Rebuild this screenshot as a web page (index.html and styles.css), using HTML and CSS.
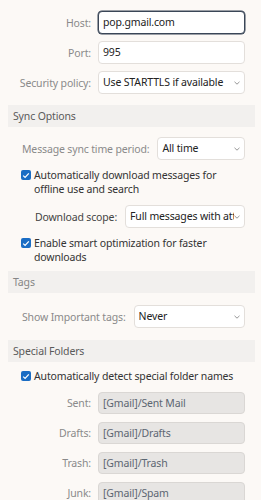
FILE: index.html
```html
<!DOCTYPE html>
<html lang="en">
<head>
	<meta charset="UTF-8">
	<title>Account settings</title>
	<link rel="stylesheet" href="styles.css">
</head>
<body>
	<div class="page">
		<!-- server -->
		<div class="grid server">
			<label class="lbl">Host:</label>
			<div class="field focus">pop.gmail.com</div>
			<label class="lbl">Port:</label>
			<div class="field">995</div>
			<label class="lbl">Security policy:</label>
			<div class="field select"><span class="val">Use STARTTLS if available</span><svg class="chev" width="6" height="4" viewBox="0 0 6 4"><polyline points="0.5,0.8 3,3.2 5.5,0.8" fill="none" stroke="#8a8a8a" stroke-width="0.9"/></svg></div>
		</div>

		<h3 class="head">Sync Options</h3>
		<div class="sec s-sync">
			<div class="row r-sync">
				<label class="lbl">Message sync time period:</label>
				<div class="field select"><span class="val">All time</span><svg class="chev" width="6" height="4" viewBox="0 0 6 4"><polyline points="0.5,0.8 3,3.2 5.5,0.8" fill="none" stroke="#8a8a8a" stroke-width="0.9"/></svg></div>
			</div>
			<div class="check c1">
				<span class="box"><svg width="8" height="7" viewBox="0 0 8 7"><polyline points="1.2,3.6 3.1,5.4 6.8,1.4" fill="none" stroke="#fff" stroke-width="1.3"/></svg></span>
				<span class="txt">Automatically download messages for offline use and search</span>
			</div>
			<div class="row r-scope">
				<label class="lbl dark">Download scope:</label>
				<div class="field select"><span class="val">Full messages with attachments</span><svg class="chev" width="6" height="4" viewBox="0 0 6 4"><polyline points="0.5,0.8 3,3.2 5.5,0.8" fill="none" stroke="#8a8a8a" stroke-width="0.9"/></svg></div>
			</div>
			<div class="check c2">
				<span class="box"><svg width="8" height="7" viewBox="0 0 8 7"><polyline points="1.2,3.6 3.1,5.4 6.8,1.4" fill="none" stroke="#fff" stroke-width="1.3"/></svg></span>
				<span class="txt">Enable smart optimization for faster downloads</span>
			</div>
		</div>

		<h3 class="head light">Tags</h3>
		<div class="sec s-tags">
			<div class="row r-tags">
				<label class="lbl">Show Important tags:</label>
				<div class="field select"><span class="val">Never</span><svg class="chev" width="6" height="4" viewBox="0 0 6 4"><polyline points="0.5,0.8 3,3.2 5.5,0.8" fill="none" stroke="#8a8a8a" stroke-width="0.9"/></svg></div>
			</div>
		</div>

		<h3 class="head">Special Folders</h3>
		<div class="sec s-special">
			<div class="check c3">
				<span class="box"><svg width="8" height="7" viewBox="0 0 8 7"><polyline points="1.2,3.6 3.1,5.4 6.8,1.4" fill="none" stroke="#fff" stroke-width="1.3"/></svg></span>
				<span class="txt">Automatically detect special folder names</span>
			</div>
			<div class="grid folders">
				<label class="lbl">Sent:</label>
				<div class="field off">[Gmail]/Sent Mail</div>
				<label class="lbl">Drafts:</label>
				<div class="field off">[Gmail]/Drafts</div>
				<label class="lbl">Trash:</label>
				<div class="field off">[Gmail]/Trash</div>
				<label class="lbl">Junk:</label>
				<div class="field off">[Gmail]/Spam</div>
			</div>
		</div>
	</div>
</body>
</html>
```

FILE: styles.css
```css
*{ margin:0; padding:0; box-sizing:border-box; }
body{ background:#fcf9f6; font-family:"Noto Sans","Open Sans",sans-serif; font-size:10.5px; letter-spacing:-0.15px; color:#222; }

.page{ padding:11px 6px 0 8px; }

.grid{ display:grid; grid-template-columns:83px 1fr; column-gap:7px; row-gap:7px; align-items:center; padding-right:10px; }
.server{ padding-bottom:11px; }
.lbl{ color:#8a8a8a; white-space:nowrap; text-align:right; }
.lbl.dark{ color:#444; }

.field{ height:23px; line-height:21px; padding:0 4px; background:#fff; border:1px solid #e3dfdb; border-radius:4px; white-space:nowrap; overflow:hidden; }
.field.focus{ border-color:#3a4657; box-shadow:0 0 0 0.5px #3a4657; }
.field.off{ height:22px; line-height:20px; background:#e7e5e3; border-color:#dad7d4; color:#5c6672; }
.select{ display:flex; align-items:center; padding-right:4px; }
.select .val{ flex:1; overflow:hidden; }
.select .chev{ flex:none; }

.head{ height:22px; line-height:22px; padding-left:5px; background:#f2f0ee; font-size:10.5px; font-weight:normal; color:#5a5a5a; }
.head.light{ color:#858585; }

.sec{ padding-right:10px; }
.s-sync{ padding-top:10px; padding-bottom:7px; }
.s-tags{ padding-top:12px; padding-bottom:12px; }
.s-special{ padding-top:7px; }

.row{ display:flex; align-items:center; gap:8px; }
.row .field{ flex:1; }
.r-sync{ padding-left:14px; }
.r-scope{ padding-left:27px; margin-top:9px; }
.r-tags{ padding-left:14px; }

.check{ display:flex; align-items:flex-start; gap:3px; padding-left:13px; line-height:14px; margin-top:8px; }
.check .box{ flex:none; width:10px; height:10px; margin-top:2px; border-radius:2px; background:#1a6dc4; display:flex; align-items:center; justify-content:center; }
.check .txt{ color:#333; }
.c3{ margin-top:0; }
.folders{ margin-top:9px; padding-right:0; row-gap:8px; }
```
